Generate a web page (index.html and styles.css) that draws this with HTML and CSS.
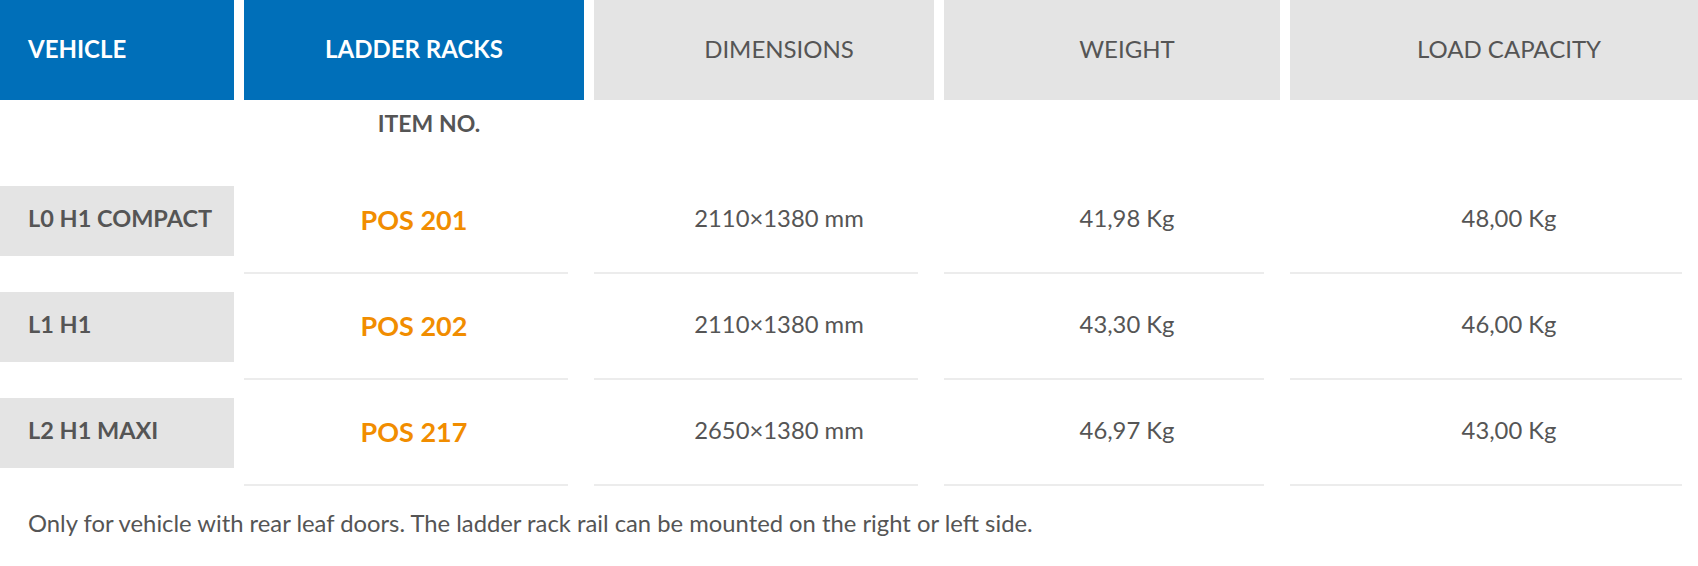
FILE: index.html
```html
<!DOCTYPE html>
<html lang="en">
<head>
<meta charset="utf-8">
<title>Ladder racks</title>
<link rel="stylesheet" href="styles.css">
</head>
<body>
<div class="spec">
  <div class="spec-table">
    <div class="hd hd-blue hd-left">VEHICLE</div>
    <div class="hd hd-blue">LADDER RACKS</div>
    <div class="hd hd-grey off">DIMENSIONS</div>
    <div class="hd hd-grey off">WEIGHT</div>
    <div class="hd hd-grey off">LOAD CAPACITY</div>

    <div class="sub"></div>
    <div class="sub sub-item">ITEM NO.</div>
    <div class="sub"></div>
    <div class="sub"></div>
    <div class="sub"></div>

    <div class="veh"><span>L0 H1 COMPACT</span></div>
    <div class="cell pos"><span>POS 201</span></div>
    <div class="cell val"><span>2110×1380 mm</span></div>
    <div class="cell val"><span>41,98 Kg</span></div>
    <div class="cell val"><span>48,00 Kg</span></div>

    <div class="veh"><span>L1 H1</span></div>
    <div class="cell pos"><span>POS 202</span></div>
    <div class="cell val"><span>2110×1380 mm</span></div>
    <div class="cell val"><span>43,30 Kg</span></div>
    <div class="cell val"><span>46,00 Kg</span></div>

    <div class="veh"><span>L2 H1 MAXI</span></div>
    <div class="cell pos"><span>POS 217</span></div>
    <div class="cell val"><span>2650×1380 mm</span></div>
    <div class="cell val"><span>46,97 Kg</span></div>
    <div class="cell val"><span>43,00 Kg</span></div>
  </div>
  <p class="note">Only for vehicle with rear leaf doors. The ladder rack rail can be mounted on the right or left side.</p>
</div>
</body>
</html>
```
FILE: styles.css
```css
* { box-sizing: border-box; }
html, body { margin: 0; padding: 0; background: #fff; }
body {
  font-family: "Lato", "Noto Sans", "Liberation Sans", sans-serif;
  color: #555;
}
.spec-table {
  display: grid;
  grid-template-columns: 234px 340px 340px 336px 408px;
  grid-template-rows: 100px 86px;
  grid-auto-rows: 106px;
  column-gap: 10px;
  align-items: start;
}
.hd {
  display: flex;
  align-items: center;
  justify-content: center;
  height: 100px;
  font-size: 24px;
  line-height: 1;
  padding-bottom: 2px;
}
.hd-blue { background: #006fb9; color: #fff; font-weight: 700; }
.hd-grey { background: #e4e4e4; color: #555; font-weight: 400; }
.hd-left { justify-content: flex-start; padding-left: 28px; }
.off { padding-left: 30px; }

.sub-item {
  font-weight: 700;
  font-size: 23px;
  line-height: 1;
  text-align: center;
  padding-left: 30px;
  padding-top: 12px;
}

.veh {
  height: 70px;
  background: #e4e4e4;
  display: flex;
  align-items: center;
  padding-left: 28px;
  padding-bottom: 4px;
  font-weight: 700;
  font-size: 23.5px;
  line-height: 1;
}
.cell {
  display: flex;
  align-items: center;
  justify-content: center;
  height: 88px;
  margin-right: 16px;
  padding-bottom: 20px;
  border-bottom: 2px solid #ececec;
  line-height: 1;
}
.val {
  font-size: 23.8px;
  padding-left: 46px;
}
.pos {
  color: #f18d00;
  font-weight: 700;
  font-size: 27px;
  padding-left: 16px;
}
.note {
  margin: 4px 0 0 28px;
  font-size: 23.8px;
  line-height: 1.3;
  color: #555;
}
```
